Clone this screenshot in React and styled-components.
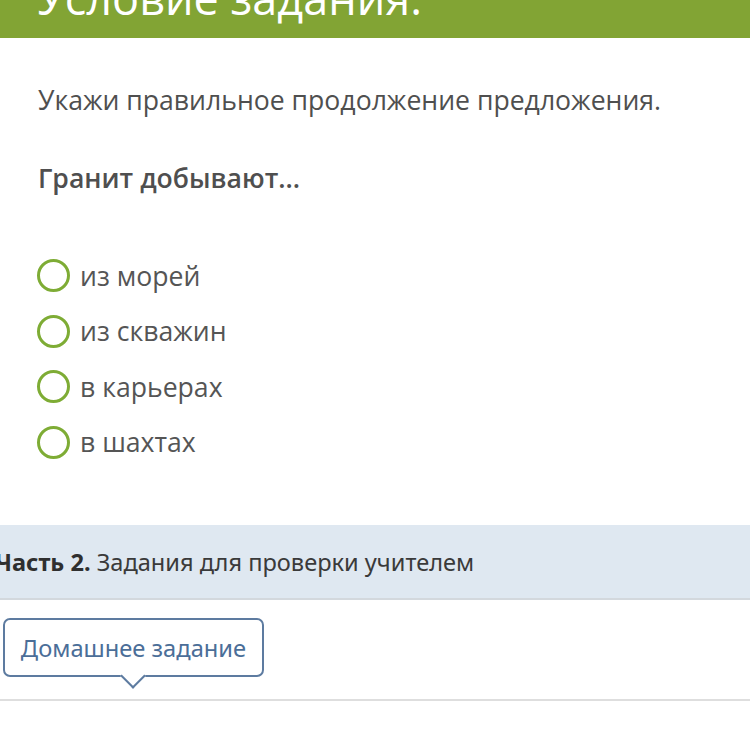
import React from "react";
import styled, { createGlobalStyle } from "styled-components";

const Global = createGlobalStyle`
  html, body { margin: 0; padding: 0; background: #ffffff; }
  body { overflow: hidden; font-family: "Open Sans", "Noto Sans", sans-serif; }
`;

const Page = styled.div`
  width: 750px;
  height: 751px;
  display: flex;
  flex-direction: column;
  background: #fff;
`;

const Header = styled.header`
  height: 38px;
  flex: none;
  background: #82a434;
  overflow: hidden;
  display: flex;
  align-items: flex-end;
  padding-left: 37px;
`;

const Title = styled.h1`
  margin: 0 0 18px 0;
  font-family: "Open Sans", sans-serif;
  font-weight: 400;
  font-size: 45px;
  line-height: 44px;
  color: #ffffff;
  white-space: nowrap;
`;

const Main = styled.main`
  padding: 45px 38px 0 38px;
  display: flex;
  flex-direction: column;
`;

const Paragraph = styled.p`
  margin: 0 0 ${p => p.$gap || 0}px 0;
  font-size: 26.6px;
  line-height: 35px;
  font-weight: ${p => (p.$bold ? 600 : 400)};
  color: #4f4f4f;
  white-space: nowrap;
`;

const Options = styled.ul`
  list-style: none;
  margin: 8px 0 0 -1px;
  padding: 0;
  display: flex;
  flex-direction: column;
`;

const Option = styled.li`
  height: 55.5px;
  display: flex;
  align-items: center;
  gap: 10px;
  font-size: 26.6px;
  color: #555555;
`;

const Radio = styled.span`
  width: 33px;
  height: 33px;
  box-sizing: border-box;
  border: 3px solid #7eac35;
  border-radius: 50%;
  flex: none;
`;

const PartBar = styled.section`
  margin-top: 55px;
  height: 73px;
  background: #dfe8f1;
  border-bottom: 2px solid #d3d8dd;
  display: flex;
  align-items: center;
  font-family: "Noto Sans", "Open Sans", sans-serif;
  font-size: 23.6px;
  color: #3a3a3a;
  text-indent: -5px;
  white-space: nowrap;
`;

const Strong = styled.b`
  font-weight: 700;
  color: #2f2f2f;
`;

const Tabs = styled.nav`
  padding: 18px 0 0 3px;
  height: 101px;
  box-sizing: border-box;
  border-bottom: 2px solid #dedede;
`;

const TabButton = styled.div`
  position: relative;
  width: 261px;
  height: 59px;
  box-sizing: border-box;
  border: 2px solid #5d7ba0;
  border-radius: 7px;
  display: flex;
  align-items: center;
  justify-content: center;
  font-family: "Noto Sans", "Open Sans", sans-serif;
  font-size: 23.7px;
  color: #4b6e98;
  background: #fff;

  &::after {
    content: "";
    position: absolute;
    left: 119px;
    bottom: -10px;
    width: 18px;
    height: 18px;
    box-sizing: border-box;
    background: #fff;
    border-right: 2px solid #5d7ba0;
    border-bottom: 2px solid #5d7ba0;
    transform: rotate(45deg);
  }
`;

const options = ["из морей", "из скважин", "в карьерах", "в шахтах"];

export default function App() {
  return (
    <Page>
      <Global />
      <Header>
        <Title>Условие задания:</Title>
      </Header>
      <Main>
        <Paragraph $gap={43}>Укажи правильное продолжение предложения.</Paragraph>
        <Paragraph $bold $gap={44}>Гранит добывают...</Paragraph>
        <Options>
          {options.map(o => (
            <Option key={o}>
              <Radio />
              <span>{o}</span>
            </Option>
          ))}
        </Options>
      </Main>
      <PartBar>
        <span>
          <Strong>Часть 2.</Strong> Задания для проверки учителем
        </span>
      </PartBar>
      <Tabs>
        <TabButton>Домашнее задание</TabButton>
      </Tabs>
    </Page>
  );
}
